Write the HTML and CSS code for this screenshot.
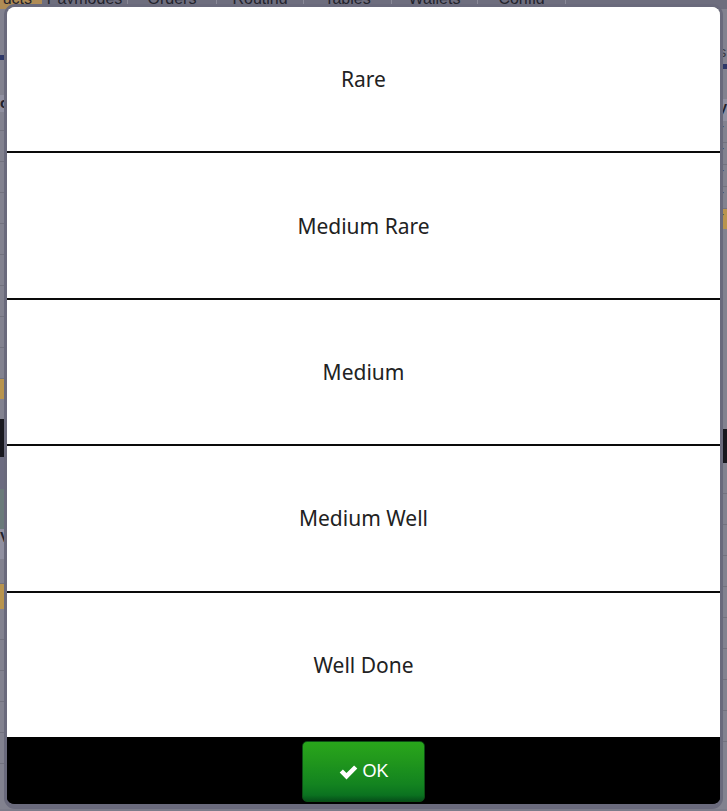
FILE: index.html
```html
<!DOCTYPE html>
<html>
<head>
<meta charset="utf-8">
<link rel="stylesheet" href="styles.css">
</head>
<body>
<div class="app">
  <div class="tabs">
    <div class="tab tab-active">ucts</div>
    <div class="tab w86">Paymodes</div>
    <div class="tab w89">Orders</div>
    <div class="tab w87">Routing</div>
    <div class="tab w88">Tables</div>
    <div class="tab w86">Wallets</div>
    <div class="tab w88">Config</div>
    <div class="tab-rest"></div>
  </div>
  <div class="panes">
    <div class="pane pane-left">
      <div class="row h46"></div>
      <div class="row h5 navy"></div>
      <div class="row h35"></div>
      <div class="row h17 head">o</div>
      <div class="row h19 line"></div>
      <div class="row h31 line"></div>
      <div class="row h31 line"></div>
      <div class="row h31 line"></div>
      <div class="row h31 line"></div>
      <div class="row h31 line"></div>
      <div class="row h31 line"></div>
      <div class="row h31 line"></div>
      <div class="row h31 line"></div>
      <div class="row h20 orange"></div>
      <div class="row h20"></div>
      <div class="row h38 dark"></div>
      <div class="row h32 slate"></div>
      <div class="row h40 teal"></div>
      <div class="row h30 head">V</div>
      <div class="row h25 line"></div>
      <div class="row h25 orange"></div>
      <div class="row h31 line"></div>
      <div class="row h31 line"></div>
      <div class="row h31 line"></div>
      <div class="row h31 line"></div>
      <div class="row h31 line"></div>
    </div>
    <div class="pane pane-right">
      <div class="row h35"></div>
      <div class="row h20 text">s</div>
      <div class="row h5 navy"></div>
      <div class="row h30"></div>
      <div class="row h22 head">y</div>
      <div class="row h22 line text">r</div>
      <div class="row h22 line text">r</div>
      <div class="row h22 line text">r</div>
      <div class="row h22 line text">r</div>
      <div class="row h20 orange text">r</div>
      <div class="row h200"></div>
      <div class="row h34 dark"></div>
      <div class="row h31 line"></div>
      <div class="row h31 line"></div>
      <div class="row h31 line"></div>
      <div class="row h31 line"></div>
      <div class="row h31 line"></div>
      <div class="row h31 line"></div>
      <div class="row h31 line"></div>
      <div class="row h31 line"></div>
      <div class="row h31 line"></div>
    </div>
  </div>
</div>

<div class="dialog">
  <div class="options">
    <button class="opt">Rare</button>
    <button class="opt">Medium Rare</button>
    <button class="opt">Medium</button>
    <button class="opt">Medium Well</button>
    <button class="opt opt-last">Well Done</button>
  </div>
  <div class="footer">
    <button class="ok">
      <svg class="check" viewBox="0 0 20 16" width="21" height="16" aria-hidden="true">
        <path d="M1.2 8.6 L4.4 5.4 L8 9 L15.6 1.4 L18.8 4.6 L8 15.4 Z" fill="#fff"/>
      </svg>
      <span>OK</span>
    </button>
  </div>
</div>
</body>
</html>
```

FILE: styles.css
```css
* { box-sizing: border-box; }
html, body {
  margin: 0;
  padding: 0;
  width: 727px;
  height: 811px;
  overflow: hidden;
}
body {
  background: #7c7c8a;
  font-family: "Liberation Sans", Arial, sans-serif;
  position: relative;
}

/* background application (dimmed) */
.app {
  width: 727px;
  height: 811px;
  overflow: hidden;
}
.tabs {
  display: flex;
  height: 20px;
  margin-top: -11px;
  background: #6e6e7e;
  font-size: 16px;
  line-height: 20px;
  color: #23232c;
}
.tab {
  flex: none;
  text-align: center;
  border-right: 1px solid #8a8a98;
}
.tab-active {
  width: 42px;
  background: #b08c55;
  text-align: right;
  padding-right: 10px;
  border-right: none;
}
.w86 { width: 86px; }
.w87 { width: 87px; }
.w88 { width: 88px; }
.w89 { width: 89px; }
.tab-rest { flex: 1; }

.panes {
  display: flex;
  height: 800px;
}
.pane {
  display: flex;
  flex-direction: column;
  background: #82828f;
}
.pane-left { width: 363px; border-right: 1px solid #6c6c78; }
.pane-right { flex: 1; align-items: flex-end; }
.pane-right .row { width: 100%; padding-left: 359px; }

.row {
  flex: none;
  font-size: 15px;
  line-height: 1;
  color: #22222c;
  font-weight: bold;
}
.row.text { font-weight: normal; color: #3a3a44; }
.line { border-bottom: 1px solid #72727e; }
.head { background: #9090a0; }
.navy { background: #2e3868; }
.orange { background: #b8944e; }
.dark { background: #18181e; }
.slate { background: #6c6c80; }
.teal { background: #6a7a7a; }
.h5 { height: 5px; }
.h17 { height: 17px; }
.h19 { height: 19px; }
.h20 { height: 20px; }
.h22 { height: 22px; }
.h25 { height: 25px; }
.h30 { height: 30px; }
.h31 { height: 31px; }
.h32 { height: 32px; }
.h34 { height: 34px; }
.h35 { height: 35px; }
.h38 { height: 38px; }
.h40 { height: 40px; }
.h46 { height: 46px; }
.h200 { height: 200px; }

/* modal dialog (overlays the app) */
.dialog {
  position: absolute;
  left: 4px;
  top: 4px;
  width: 719px;
  height: 805px;
  border: 3px solid #6a6a7c;
  border-bottom-width: 5px;
  border-radius: 11px;
  background: #000;
  overflow: hidden;
  display: flex;
  flex-direction: column;
}
.options {
  height: 732px;
  display: flex;
  flex-direction: column;
  background: #fff;
}
.opt {
  flex: 1;
  margin: 0;
  padding: 0;
  background: #fff;
  border: none;
  border-bottom: 2px solid #0a0a0a;
  box-shadow: 0 1px 0 #b0b0b0;
  font-family: "Noto Sans", "Open Sans", sans-serif;
  font-size: 21px;
  color: #222;
  text-align: center;
}
.opt-last { border-bottom-color: #000; box-shadow: none; }

.footer {
  flex: 1;
  display: flex;
  justify-content: center;
  align-items: center;
  background: #000;
}
.ok {
  width: 123px;
  height: 61px;
  margin: 0;
  padding: 0;
  border: 1px solid #0b4e14;
  border-radius: 5px;
  background: linear-gradient(to bottom, #29a61b 0%, #22991c 28%, #1a8e1e 50%, #138320 72%, #0b7220 90%, #06501a 100%);
  color: #fff;
  font-family: "Liberation Sans", Arial, sans-serif;
  font-size: 18px;
  display: flex;
  align-items: center;
  justify-content: center;
  gap: 3px;
}
.check { display: block; margin-top: 1px; }
```
